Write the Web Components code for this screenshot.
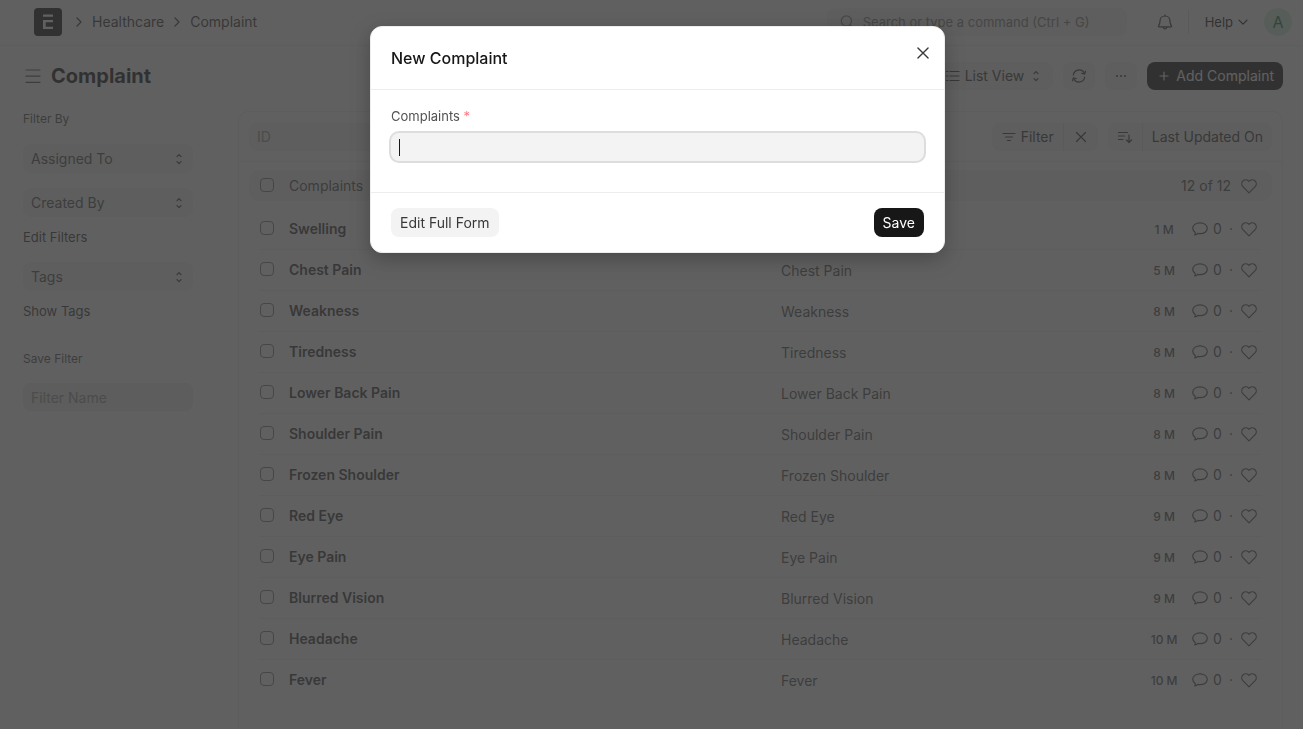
<!DOCTYPE html>
<html lang="en">
<head>
<meta charset="utf-8">
<title>Complaint</title>
<style>
    :root {
        --gray-50: #f8f8f8;
        --gray-100: #f3f3f3;
        --gray-200: #ededed;
        --gray-300: #e2e2e2;
        --gray-500: #999999;
        --gray-600: #7c7c7c;
        --gray-700: #525252;
        --gray-800: #383838;
        --gray-900: #171717;
    }

    html, body {
        height: 100%;
    }

    body {
        margin: 0;
        overflow: hidden;
        background: #fff;
        color: var(--gray-800);
        font: 14px/20px Inter, "Liberation Sans", sans-serif;
    }
</style>
</head>
<body>
<complaint-app></complaint-app>

<script>
const ICONS = {
    right: '<path d="M6 4l4 4-4 4"/>',
    down: '<path d="M4 6.2l4 4 4-4"/>',
    select: '<path d="M6 5.700l2-2 2 2M6 10.700l2 2 2-2"/>',
    search: '<circle cx="7.4" cy="7" r="5.1"/><path d="M11.2 10.8l3 3"/>',
    bell: '<path d="M8 .8v1.200M8 2C5 2 3 4.200 3 7c0 2.900-.6 3.700-1.500 5-.3.4 0 .9.4.9h12.200c.4 0 .7-.5.4-.9-.9-1.300-1.500-2.100-1.500-5 0-2.800-2-5-5-5zM6 13c.2 1.200 1 1.900 2 1.900s1.800-.7 2-1.900"/>',
    menu: '<path d="M1 2h14M1 8.200h14M1 14.400h14"/>',
    list: '<path d="M5 3.500h9M5 8h9M5 12.500h9M1.500 3.500H3M1.500 8H3M1.500 12.500H3"/>',
    refresh: '<path d="M2.300 7a5.800 5.800 0 0 1 11-1.700M13.700 9a5.800 5.800 0 0 1-11 1.700"/><path d="M14.500 3.200l-.9 3-3-.9M1.500 12.800l.9-3 3 .9"/>',
    dots: '<path d="M4 8h.01M8 8h.01M12 8h.01" stroke-width="2"/>',
    plus: '<path d="M8 4v8M4 8h8"/>',
    filter: '<path d="M2 4.500h12M4.500 8h7M6.500 11.500h3"/>',
    close: '<path d="M3.500 3.500l9 9M12.500 3.500l-9 9"/>',
    sort: '<path d="M1.500 3.500h9M1.500 7h6M1.500 10.500h4.500M12 6v7.500M9.500 11l2.500 2.500 2.500-2.500"/>',
    comment: '<path d="M8 1.800c4.100 0 7.300 2.400 7.300 5.500S12.100 12.700 8 12.700c-.8 0-1.600-.1-2.300-.3-.6.9-1.700 1.500-3 1.600.5-.7.7-1.600.5-2.600C1.600 10.400.7 8.900.7 7.300c0-3.100 3.200-5.500 7.300-5.500z"/>',
    heart: '<path d="M8 3.300c1.500-1.900 4.300-2 5.900-.5 1.700 1.600 1.800 4.200.2 5.900L8 14.800 1.900 8.700C.3 7 .4 4.400 2.100 2.800c1.600-1.500 4.400-1.400 5.900.5z"/>'
};

const COMPLAINTS = [
    ["Swelling", "1 M"],
    ["Chest Pain", "5 M"],
    ["Weakness", "8 M"],
    ["Tiredness", "8 M"],
    ["Lower Back Pain", "8 M"],
    ["Shoulder Pain", "8 M"],
    ["Frozen Shoulder", "8 M"],
    ["Red Eye", "9 M"],
    ["Eye Pain", "9 M"],
    ["Blurred Vision", "9 M"],
    ["Headache", "10 M"],
    ["Fever", "10 M"]
];

// Every element gets the same reset plus its own markup
class BaseElement extends HTMLElement {
    constructor() {
        super();
        this.attachShadow({ mode: "open" });
    }

    connectedCallback() {
        this.shadowRoot.innerHTML = `
            <style>
                *, :host { box-sizing: border-box; }
                button, input, select { font: inherit; color: inherit; border: 0; margin: 0; outline: 0; }
                a { color: inherit; text-decoration: none; }
            </style>
            ${this.template()}
        `;
    }
}

class UiIcon extends BaseElement {
    template() {
        return `
            <style>
                :host { display: inline-flex; flex: none; width: 16px; height: 16px; }
                svg { width: 100%; height: 100%; fill: none; stroke: currentColor; stroke-width: 1.2; stroke-linecap: round; stroke-linejoin: round; }
            </style>
            <svg viewBox="0 0 16 16" aria-hidden="true">${ICONS[this.getAttribute("name")]}</svg>
        `;
    }
}

class UiButton extends BaseElement {
    template() {
        const label = this.getAttribute("label");
        return `
            <style>
                :host { display: block; flex: none; }
                button {
                    display: flex;
                    align-items: center;
                    justify-content: center;
                    gap: 4px;
                    width: 100%;
                    height: var(--button-height, 28px);
                    padding: 0 9px;
                    border-radius: 8px;
                    background: var(--gray-100);
                    color: var(--gray-800);
                    white-space: nowrap;
                    cursor: pointer;
                }
                :host([variant="primary"]) button { background: var(--gray-900); color: #fff; }
                :host([variant="first"]) button { border-radius: 8px 0 0 8px; border-right: 1px solid var(--gray-300); }
                :host([variant="last"]) button { border-radius: 0 8px 8px 0; }
            </style>
            <button type="button" ${label ? `aria-label="${label}"` : ""}><slot></slot></button>
        `;
    }
}

class UiSelect extends BaseElement {
    template() {
        const label = this.getAttribute("label");
        return `
            <style>
                :host { display: grid; align-items: center; color: var(--gray-700); }
                select, ui-icon { grid-area: 1 / 1; }
                select {
                    appearance: none;
                    width: 100%;
                    height: 29px;
                    padding: 0 8px;
                    border-radius: 8px;
                    background: var(--gray-100);
                }
                ui-icon { justify-self: end; margin-right: 6px; pointer-events: none; color: var(--gray-800); }
            </style>
            <select aria-label="${label}"><option>${label}</option></select>
            <ui-icon name="select"></ui-icon>
        `;
    }
}

class AppNavbar extends BaseElement {
    template() {
        return `
            <style>
                :host { display: block; border-bottom: 1px solid var(--gray-200); }
                header { display: flex; align-items: center; height: 45px; padding: 0 11px 1px 34px; }
                .logo { display: flex; width: 28px; height: 28px; }
                nav { display: flex; align-items: center; gap: 5px; margin-left: 9px; flex: 1; }
                .search {
                    display: flex;
                    align-items: center;
                    gap: 8px;
                    width: 300px;
                    height: 28px;
                    padding: 0 12px;
                    border-radius: 8px;
                    background: var(--gray-100);
                    color: var(--gray-600);
                    font-size: 13px;
                }
                .search input { flex: 1; min-width: 0; padding: 0; background: none; }
                .search input::placeholder { color: var(--gray-600); opacity: 1; }
                .icon-button { display: flex; padding: 0; background: none; margin: 0 15px 0 30px; }
                .help {
                    display: flex;
                    align-items: center;
                    gap: 2px;
                    height: 24px;
                    padding: 0 0 0 16px;
                    border-left: 1px solid var(--gray-300);
                    background: none;
                    font-size: 13px;
                    color: var(--gray-900);
                }
                .avatar {
                    width: 28px;
                    height: 28px;
                    padding: 0;
                    margin-left: 13px;
                    border-radius: 50%;
                    background: #d3f0dd;
                    color: #16794c;
                    font-size: 16px;
                }
            </style>
            <header>
                <a class="logo" href="#" aria-label="Home">
                    <svg viewBox="0 0 28 28" width="28" height="28">
                        <rect width="28" height="28" rx="4" fill="#171717"/>
                        <path d="M9 6.500h10v2.300H9zM9 12h10v2.300h-7.300v4.400H19V21H9z" fill="#fff"/>
                    </svg>
                </a>
                <nav aria-label="Breadcrumb">
                    <ui-icon name="right"></ui-icon>
                    <a href="#">Healthcare</a>
                    <ui-icon name="right"></ui-icon>
                    <a href="#">Complaint</a>
                </nav>
                <label class="search">
                    <ui-icon name="search"></ui-icon>
                    <input type="text" aria-label="Search" placeholder="Search or type a command (Ctrl + G)">
                </label>
                <button class="icon-button" type="button" aria-label="Notifications"><ui-icon name="bell"></ui-icon></button>
                <button class="help" type="button">Help <ui-icon name="down"></ui-icon></button>
                <button class="avatar" type="button">A</button>
            </header>
        `;
    }
}

class PageHead extends BaseElement {
    template() {
        return `
            <style>
                :host { display: flex; align-items: center; gap: 10px; height: 60px; padding: 0 20px 0 25px; }
                .toggle { display: flex; padding: 0; background: none; color: var(--gray-700); }
                h1 { flex: 1; margin: 0; font-size: 20px; line-height: 28px; font-weight: 700; color: var(--gray-900); }
                .square { width: 32px; }
            </style>
            <button class="toggle" type="button" aria-label="Toggle sidebar"><ui-icon name="menu"></ui-icon></button>
            <h1>Complaint</h1>
            <ui-button><ui-icon name="list"></ui-icon>List View<ui-icon name="select"></ui-icon></ui-button>
            <ui-button class="square" label="Refresh"><ui-icon name="refresh"></ui-icon></ui-button>
            <ui-button class="square" label="Menu"><ui-icon name="dots"></ui-icon></ui-button>
            <ui-button variant="primary"><ui-icon name="plus"></ui-icon>Add Complaint</ui-button>
        `;
    }
}

class SideFilters extends BaseElement {
    template() {
        return `
            <style>
                :host { display: flex; flex-direction: column; width: 170px; padding-top: 3px; }
                h2, a, label { margin: 0; font-size: 12px; line-height: 20px; font-weight: 400; color: var(--gray-700); }
                a { align-self: flex-start; margin: 10px 0 15px; font-size: 13px; color: var(--gray-800); }
                ui-select + ui-select, h2 + ui-select { margin-top: 15px; }
                label { margin-top: 13px; }
                input {
                    width: 100%;
                    height: 28px;
                    margin-top: 14px;
                    padding: 0 8px;
                    border-radius: 8px;
                    background: var(--gray-200);
                }
                input::placeholder { color: var(--gray-500); opacity: 1; }
            </style>
            <h2>Filter By</h2>
            <ui-select label="Assigned To"></ui-select>
            <ui-select label="Created By"></ui-select>
            <a href="#">Edit Filters</a>
            <ui-select label="Tags"></ui-select>
            <a href="#">Show Tags</a>
            <label for="filter-name">Save Filter</label>
            <input id="filter-name" type="text" placeholder="Filter Name">
        `;
    }
}

class ListFilters extends BaseElement {
    template() {
        return `
            <style>
                :host {
                    display: flex;
                    align-items: center;
                    justify-content: space-between;
                    height: 50px;
                    padding: 0 10px;
                    border-bottom: 1px solid var(--gray-200);
                }
                input { width: 160px; height: 28px; padding: 0 8px; border-radius: 8px; background: var(--gray-100); }
                input::placeholder { color: var(--gray-500); opacity: 1; }
                .actions, .group { display: flex; }
                .actions { gap: 10px; }
            </style>
            <input type="text" aria-label="ID" placeholder="ID">
            <div class="actions">
                <div class="group">
                    <ui-button variant="first"><ui-icon name="filter"></ui-icon>Filter</ui-button>
                    <ui-button variant="last" label="Clear filters"><ui-icon name="close"></ui-icon></ui-button>
                </div>
                <div class="group">
                    <ui-button variant="first" label="Sort direction"><ui-icon name="sort"></ui-icon></ui-button>
                    <ui-button variant="last">Last Updated On</ui-button>
                </div>
            </div>
        `;
    }
}

class ComplaintList extends BaseElement {
    template() {
        return `
            <style>
                :host { display: block; padding: 8px 10px; }
                table, thead, tbody { display: block; }
                tr { display: flex; align-items: center; padding-right: 5px; }
                th, td { display: flex; align-items: center; padding: 0; font-weight: 400; text-align: left; white-space: nowrap; }
                thead tr { height: 31px; padding: 0 15px 0 10px; border-radius: 10px; background: var(--gray-100); color: var(--gray-700); }
                tbody { margin: 8px 10px 0; }
                tbody tr { height: 41px; border-bottom: 1px solid var(--gray-200); }
                tbody tr:last-child { border-bottom-color: transparent; }
                input {
                    appearance: none;
                    width: 14px;
                    height: 14px;
                    border: 1px solid var(--gray-600);
                    border-radius: 4px;
                }
                .check { width: 30px; padding: 0 0 2px 1px; }
                .name { flex: 0 0 492px; }
                tbody .name { font-weight: 600; color: var(--gray-800); }
                .value { flex: 1; padding-top: 2px; color: var(--gray-700); }
                .time { justify-content: center; width: 30px; padding-top: 2px; margin-right: 13px; font-size: 12px; font-weight: 500; color: var(--gray-700); }
                .comments { gap: 5px; color: var(--gray-700); }
                .dot { padding: 0 8px 0 2px; }
                .like { display: flex; padding: 0; background: none; color: var(--gray-700); }
                thead .total { margin-left: auto; margin-right: 10px; }
            </style>
            <table>
                <thead>
                    <tr>
                        <th class="check"><input type="checkbox" aria-label="Select all"></th>
                        <th class="name">Complaints</th>
                        <th class="total">12 of 12</th>
                        <th><button class="like" type="button" aria-label="Liked"><ui-icon name="heart"></ui-icon></button></th>
                    </tr>
                </thead>
                <tbody>${COMPLAINTS.map((item) => this.row(item)).join("")}</tbody>
            </table>
        `;
    }

    row([name, age]) {
        return `
            <tr>
                <td class="check"><input type="checkbox" aria-label="Select ${name}"></td>
                <td class="name"><a href="#">${name}</a></td>
                <td class="value">${name === "Swelling" ? "" : name}</td>
                <td class="time">${age}</td>
                <td class="comments"><ui-icon name="comment"></ui-icon>0<span class="dot">·</span></td>
                <td><button class="like" type="button" aria-label="Like ${name}"><ui-icon name="heart"></ui-icon></button></td>
            </tr>
        `;
    }
}

class QuickEntry extends BaseElement {
    template() {
        return `
            <style>
                /* backdrop */
                :host {
                    position: fixed;
                    inset: 0;
                    display: flex;
                    align-items: flex-start;
                    justify-content: center;
                    padding: 26px 0 0 12px;
                    background: rgba(56, 56, 56, 0.8);
                }
                form {
                    width: 575px;
                    max-width: 100%;
                    background: #fff;
                    border: 1px solid var(--gray-200);
                    border-radius: 12px;
                    box-shadow: 0 6px 20px rgba(0, 0, 0, 0.25);
                }
                header { display: flex; align-items: center; justify-content: space-between; height: 63px; padding: 0 12px 0 20px; border-bottom: 1px solid var(--gray-200); }
                h2 { margin: 0; font-size: 16px; line-height: 24px; font-weight: 500; color: var(--gray-900); }
                .close { display: flex; padding: 0 0 10px; background: none; color: var(--gray-800); }
                .close ui-icon { width: 18px; height: 18px; }
                .body { padding: 16px 20px 31px; }
                label { display: block; font-size: 13px; line-height: 20px; color: var(--gray-700); }
                label span { color: #ff7a80; }
                /* the text cursor is painted so that it does not blink */
                input {
                    display: block;
                    width: 100%;
                    height: 28px;
                    margin-top: 7px;
                    padding: 0 8px;
                    border-radius: 8px;
                    caret-color: transparent;
                    background: linear-gradient(var(--gray-900), var(--gray-900)) 8px center / 1px 17px no-repeat var(--gray-100);
                    box-shadow: 0 0 0 2px #dddddd;
                }
                footer {
                    --button-height: 29px;
                    display: flex;
                    justify-content: space-between;
                    padding: 15px 20px;
                    border-top: 1px solid var(--gray-200);
                }
            </style>
            <form role="dialog" aria-labelledby="title">
                <header>
                    <h2 id="title">New Complaint</h2>
                    <button class="close" type="button" aria-label="Close"><ui-icon name="close"></ui-icon></button>
                </header>
                <div class="body">
                    <label for="complaints">Complaints <span>*</span></label>
                    <input id="complaints" type="text" required>
                </div>
                <footer>
                    <ui-button>Edit Full Form</ui-button>
                    <ui-button variant="primary">Save</ui-button>
                </footer>
            </form>
        `;
    }
}

class ComplaintApp extends BaseElement {
    template() {
        return `
            <style>
                :host { display: flex; flex-direction: column; min-height: 100vh; }
                main { display: flex; flex: 1; gap: 45px; padding: 0 20px 0 23px; }
                section { flex: 1; min-width: 0; margin-top: 5px; border: 1px solid var(--gray-200); border-bottom: 0; border-radius: 10px 10px 0 0; }
            </style>
            <app-navbar></app-navbar>
            <page-head></page-head>
            <main>
                <side-filters></side-filters>
                <section>
                    <list-filters></list-filters>
                    <complaint-list></complaint-list>
                </section>
            </main>
            <quick-entry></quick-entry>
        `;
    }
}

customElements.define("ui-icon", UiIcon);
customElements.define("ui-button", UiButton);
customElements.define("ui-select", UiSelect);
customElements.define("app-navbar", AppNavbar);
customElements.define("page-head", PageHead);
customElements.define("side-filters", SideFilters);
customElements.define("list-filters", ListFilters);
customElements.define("complaint-list", ComplaintList);
customElements.define("quick-entry", QuickEntry);
customElements.define("complaint-app", ComplaintApp);
</script>
</body>
</html>
